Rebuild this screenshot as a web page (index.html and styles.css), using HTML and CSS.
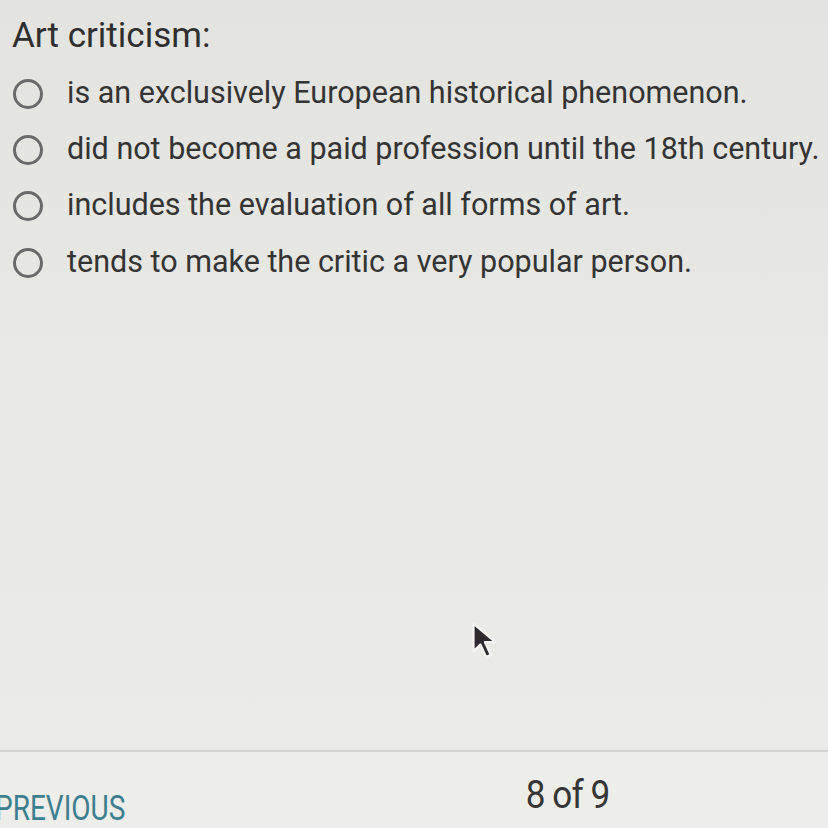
FILE: index.html
```html
<!DOCTYPE html>
<html>
<head>
  <meta charset="UTF-8">
  <title>Question 8</title>
  <link rel="stylesheet" href="styles.css">
</head>
<body>

  <div class="page">
    <div class="question">
      <div class="question-title">Art criticism:</div>
      <ul class="choices">
        <li class="choice"><span class="radio"></span>is an exclusively European historical phenomenon.</li>
        <li class="choice"><span class="radio"></span>did not become a paid profession until the 18th century.</li>
        <li class="choice"><span class="radio"></span>includes the evaluation of all forms of art.</li>
        <li class="choice"><span class="radio"></span>tends to make the critic a very popular person.</li>
      </ul>
    </div>

    <div class="footer">
      <a class="prev-link" href="#">PREVIOUS</a>
      <span class="progress">8 of 9</span>
      <span class="spacer"></span>
    </div>

    <!-- mouse pointer -->
    <svg class="cursor" width="30" height="40" viewBox="0 0 26 34">
      <path d="M3 2 L3 26 L9 20 L14 31 L18 29 L13 18 L22 18 Z" fill="#2c2a2e" stroke="#f4f4f2" stroke-width="2" stroke-linejoin="round"/>
    </svg>
  </div>

</body>
</html>
```

FILE: styles.css
```css
body {
  margin: 0;
  padding: 0;
  background-color: #e7e7e3;
  font-family: Roboto, "Liberation Sans", sans-serif;
  color: #353535;
}
.page {
  position: relative;
  width: 828px;
  height: 828px;
  display: flex;
  flex-direction: column;
  overflow: hidden;
  background: linear-gradient(180deg, #e3e3df 0%, #e8e8e5 50%, #ebebe8 100%);
}
/* Question block */
.question {
  flex: 1;
  padding: 16px 0 0 12px;
}
.question-title {
  font-size: 35px;
  line-height: 40px;
  color: #2f2f2f;
}
.choices {
  list-style: none;
  margin: 8px 0 0 0;
  padding: 0;
}
.choice {
  display: flex;
  align-items: center;
  height: 56.3px;
  font-size: 30.5px;
  color: #343434;
  white-space: nowrap;
}
.radio {
  width: 24px;
  height: 24px;
  border: 3px solid #6a6a6a;
  border-radius: 50%;
  margin: 3px 24px 0 1px;
  flex-shrink: 0;
}
/* Footer */
.footer {
  height: 76px;
  border-top: 2px solid #d2d2cf;
  background-color: #edede9;
  display: flex;
  align-items: flex-start;
}
.prev-link {
  margin: 36px 0 0 -5px;
  font-size: 35px;
  color: #3d7f8e;
  text-decoration: none;
  transform: scaleX(0.8);
  transform-origin: left;
}
.progress {
  margin: 20px 0 0 auto;
  font-size: 39px;
  color: #353535;
  letter-spacing: -1px;
  transform: scaleX(0.9);
}
.spacer {
  width: 214px;
}
.cursor {
  position: absolute;
  left: 470px;
  top: 621px;
}
```
